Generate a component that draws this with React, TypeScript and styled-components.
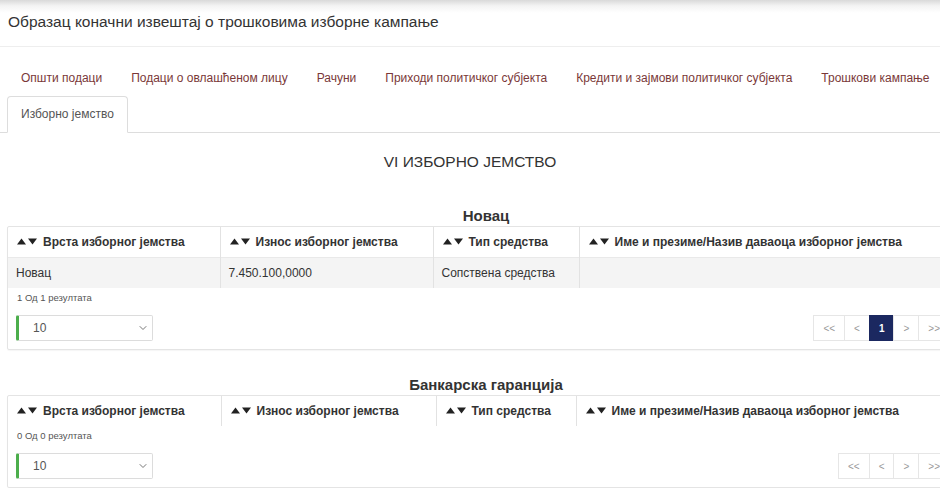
import styled, { createGlobalStyle } from "styled-components";
import { ChevronDown } from "lucide-react";

const GlobalStyle = createGlobalStyle`
  html, body {
    margin: 0;
    padding: 0;
    background: #fff;
    overflow-x: hidden;
  }
  body {
    font-family: "Liberation Sans", Arial, sans-serif;
    color: #333;
  }
  * { box-sizing: border-box; }
`;

const TopBar = styled.div`
  height: 47px;
  padding: 12px 8px 0;
  font-size: 15.5px;
  line-height: 20px;
  color: #333;
  background: linear-gradient(#d9d9d9 0, #f4f4f4 6px, #fff 13px);
  border-bottom: 1px solid #eeeeee;
`;

const Nav = styled.ul`
  list-style: none;
  margin: 0;
  padding: 13px 0 0 7px;
  width: 1000px;
  display: flex;
  flex-wrap: wrap;
  border-bottom: 1px solid #dddddd;
`;

const TabItem = styled.li`
  margin: 0 1px -1px 0;
`;

const TabLink = styled.a<{ $active?: boolean }>`
  display: block;
  padding: 8px 13px;
  font-size: 12px;
  line-height: 19px;
  color: ${(p) => (p.$active ? "#555" : "#7a3838")};
  background: #fff;
  border: 1px solid ${(p) => (p.$active ? "#dddddd" : "transparent")};
  border-bottom-color: transparent;
  border-radius: 4px 4px 0 0;
  cursor: pointer;
`;

const Heading = styled.h3`
  margin: 19px 0 0;
  text-align: center;
  font-size: 15.5px;
  font-weight: normal;
  line-height: 20px;
  color: #333;
`;

const Section = styled.section<{ $gap: number }>`
  width: 958px;
  margin: ${(p) => p.$gap}px 0 0 7px;
`;

const SectionTitle = styled.div`
  text-align: center;
  font-size: 15px;
  font-weight: bold;
  line-height: 20px;
  color: #333;
`;

const Panel = styled.div`
  border: 1px solid #e4e4e4;
  border-radius: 2px;
  padding-bottom: 8px;
  box-shadow: 0 1px 1px rgba(0, 0, 0, 0.04);
`;

const Table = styled.table`
  width: 100%;
  border-collapse: collapse;
  table-layout: fixed;
  font-size: 12px;
`;

const Col = styled.col<{ $w?: number }>`
  width: ${(p) => (p.$w ? `${p.$w}px` : "auto")};
`;

const Th = styled.th`
  height: 30px;
  padding: 0 9px;
  text-align: left;
  font-weight: bold;
  color: #333;
  white-space: nowrap;
  border-right: 1px solid #e2e2e2;
  &:last-child { border-right: none; }
`;

const Td = styled.td`
  height: 31px;
  padding: 0 8px;
  color: #333;
  background: #f4f4f4;
  border-top: 1px solid #e9e9e9;
  border-right: 1px solid #e2e2e2;
  &:last-child { border-right: none; }
`;

const SortIcon = styled.svg`
  width: 21px;
  height: 7px;
  margin-right: 5px;
  vertical-align: 1px;
`;

const Count = styled.div`
  padding: 2px 9px 0;
  font-size: 9.5px;
  line-height: 16px;
  color: #555;
`;

const Controls = styled.div`
  display: flex;
  justify-content: space-between;
  align-items: center;
  margin-top: 9px;
  padding: 0 14px 0 8px;
`;

const SelectBox = styled.div`
  width: 137px;
  height: 26px;
  display: flex;
  align-items: center;
  justify-content: space-between;
  padding: 0 3px 0 14px;
  font-size: 12px;
  color: #555;
  background: #fff;
  border: 1px solid #dcdcdc;
  border-left: 3px solid #4cae4c;
  border-radius: 2px;
`;

const Pager = styled.div`
  display: flex;
`;

const PageBtn = styled.span<{ $active?: boolean }>`
  height: 26px;
  display: flex;
  align-items: center;
  justify-content: center;
  padding: 0 9px;
  margin-left: -1px;
  font-size: 10px;
  font-weight: ${(p) => (p.$active ? "bold" : "normal")};
  color: ${(p) => (p.$active ? "#fff" : "#999")};
  background: ${(p) => (p.$active ? "#1b2860" : "#fff")};
  border: 1px solid ${(p) => (p.$active ? "#1b2860" : "#e6e6e6")};
`;

const Sort = () => (
  <SortIcon viewBox="0 0 21 7">
    <polygon points="0,6.5 4.5,0.5 9,6.5" fill="#222" />
    <polygon points="11,0.5 20,0.5 15.5,6.5" fill="#222" />
  </SortIcon>
);

const tabs = [
  "Општи подаци",
  "Подаци о овлашћеном лицу",
  "Рачуни",
  "Приходи политичког субјекта",
  "Кредити и зајмови политичког субјекта",
  "Трошкови кампање",
  "Изборно јемство",
];

const headers = [
  "Врста изборног јемства",
  "Износ изборног јемства",
  "Тип средства",
  "Име и презиме/Назив даваоца изборног јемства",
];

type Block = {
  title: string;
  gap: number;
  cols: number[];
  rows: string[][];
  pages: number[];
};

const blocks: Block[] = [
  {
    title: "Новац",
    gap: 34,
    cols: [212, 213, 146],
    rows: [["Новац", "7.450.100,0000", "Сопствена средства", ""]],
    pages: [1],
  },
  {
    title: "Банкарска гаранција",
    gap: 25,
    cols: [213, 215, 140],
    rows: [],
    pages: [],
  },
];

const GuaranteeTable = ({ block }: { block: Block }) => (
  <Section $gap={block.gap}>
    <SectionTitle>{block.title}</SectionTitle>
    <Panel>
      <Table>
        <colgroup>
          {block.cols.map((w, i) => (
            <Col key={i} $w={w} />
          ))}
          <Col />
        </colgroup>
        <thead>
          <tr>
            {headers.map((h) => (
              <Th key={h}>
                <Sort />
                {h}
              </Th>
            ))}
          </tr>
        </thead>
        <tbody>
          {block.rows.map((r, i) => (
            <tr key={i}>
              {r.map((c, j) => (
                <Td key={j}>{c}</Td>
              ))}
            </tr>
          ))}
        </tbody>
      </Table>
      <Count>
        {block.rows.length} Од {block.rows.length} резултата
      </Count>
      <Controls>
        <SelectBox>
          <span>10</span>
          <ChevronDown size={12} color="#777" strokeWidth={2} />
        </SelectBox>
        <Pager>
          <PageBtn>&lt;&lt;</PageBtn>
          <PageBtn>&lt;</PageBtn>
          {block.pages.map((p) => (
            <PageBtn key={p} $active>
              {p}
            </PageBtn>
          ))}
          <PageBtn>&gt;</PageBtn>
          <PageBtn>&gt;&gt;</PageBtn>
        </Pager>
      </Controls>
    </Panel>
  </Section>
);

export default function App() {
  return (
    <>
      <GlobalStyle />
      <TopBar>Образац коначни извештај о трошковима изборне кампање</TopBar>
      <Nav>
        {tabs.map((t, i) => (
          <TabItem key={t}>
            <TabLink $active={i === tabs.length - 1}>{t}</TabLink>
          </TabItem>
        ))}
      </Nav>
      <Heading>VI ИЗБОРНО ЈЕМСТВО</Heading>
      {blocks.map((b) => (
        <GuaranteeTable key={b.title} block={b} />
      ))}
    </>
  );
}
